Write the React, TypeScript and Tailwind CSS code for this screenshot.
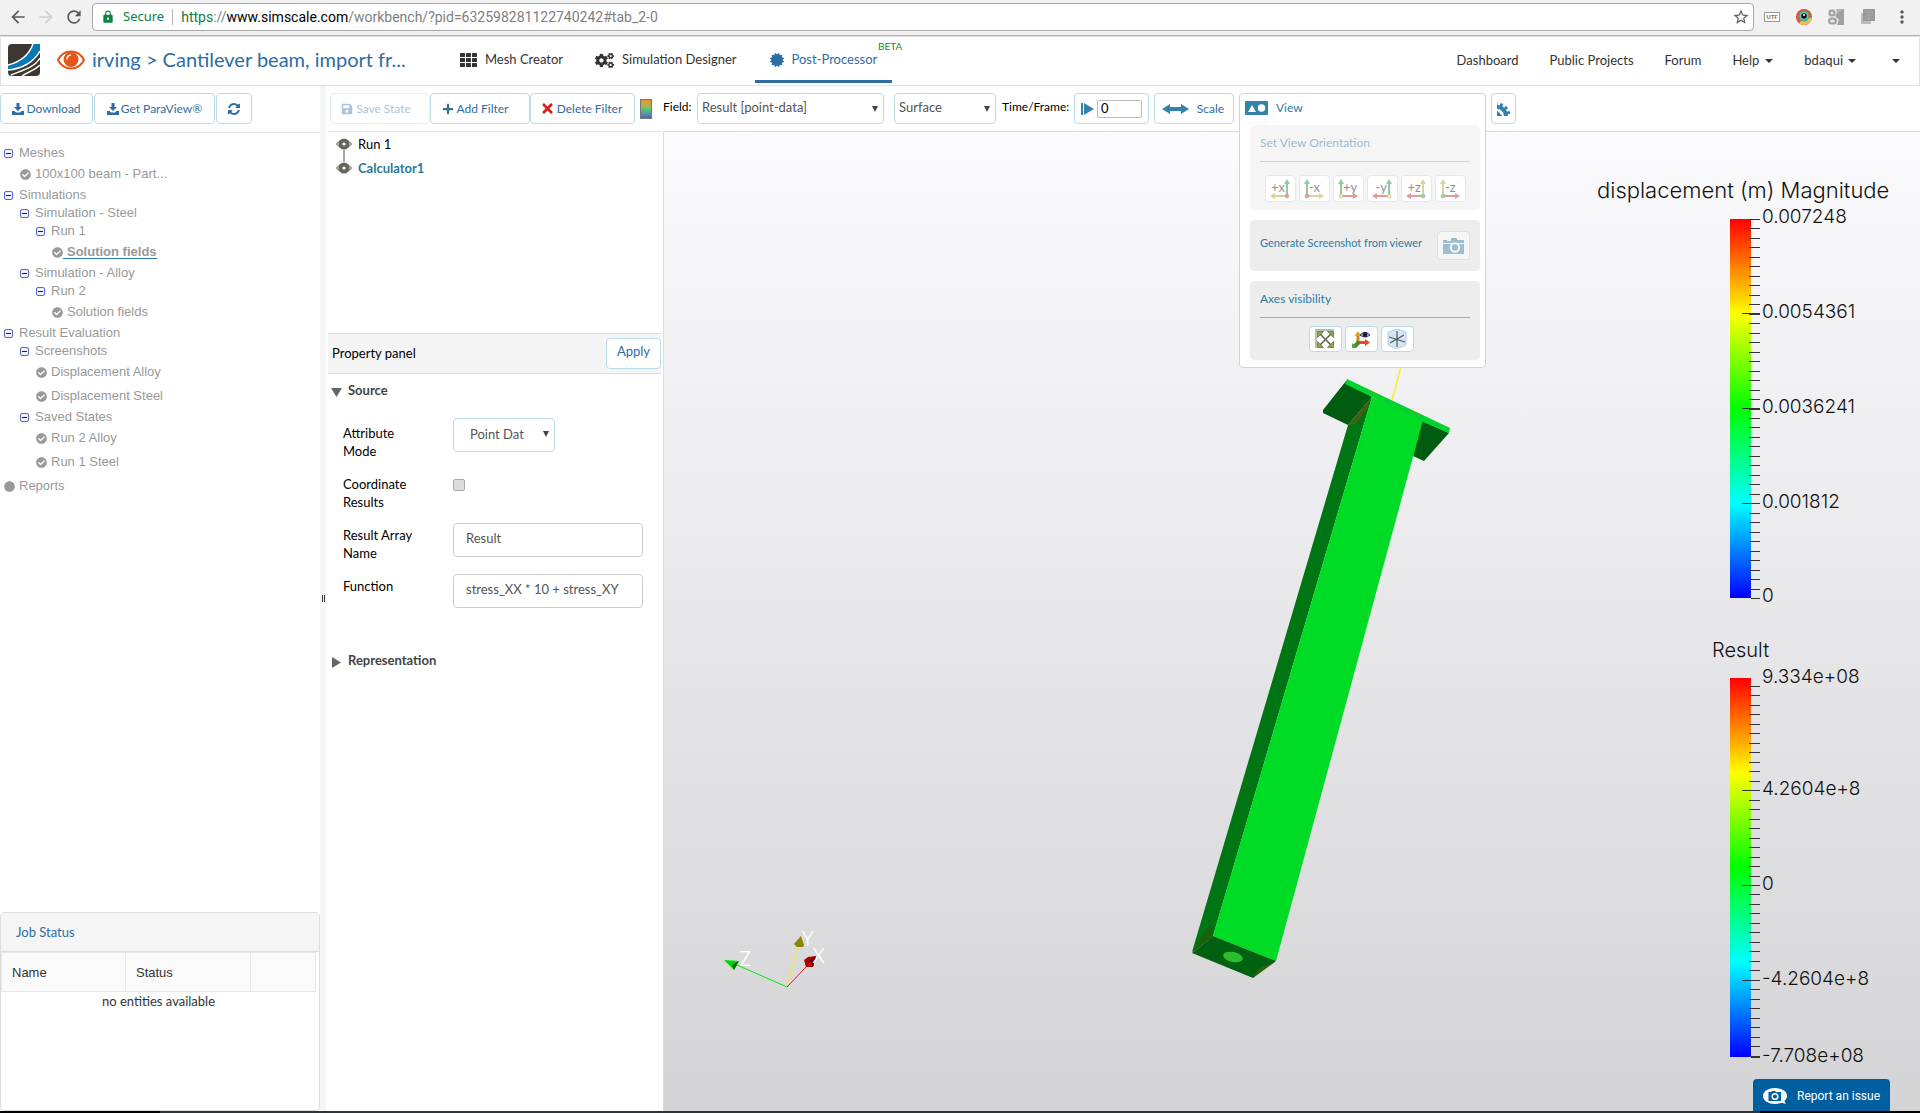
import { useState } from "react";
import type { ReactNode } from "react";
import clsx from "clsx";
import { FaCertificate, FaCheckCircle, FaCircle, FaCogs, FaPlus, FaSave, FaTimes } from "react-icons/fa";
import { MdArrowBack, MdArrowForward, MdLock, MdMoreVert, MdRefresh, MdStarBorder } from "react-icons/md";

const BUTTON =
  "flex h-[31px] shrink-0 items-center justify-center rounded border border-[#bcdbe8] bg-white text-[12px] text-[#2e6da4]";

/* ---------- icons ---------- */

function DownloadIcon() {
  return (
    <svg viewBox="0 0 12 12" className="h-3 w-3" fill="currentColor">
      <path d="M4.500 0h3v4H10L6 8 2 4h2.500zM0 8h2.500l1.500 1.500h4L9.500 8H12v4H0z" />
    </svg>
  );
}

function RefreshIcon() {
  return (
    <svg viewBox="0 0 1792 1792" className="h-[14px] w-[14px]" fill="currentColor">
      <path d="M1639 1056q0 5-1 7-64 268-268 434.500t-478 166.500q-146 0-282.500-55t-243.500-157l-129 129q-19 19-45 19t-45-19-19-45v-448q0-26 19-45t45-19h448q26 0 45 19t19 45-19 45l-137 137q71 66 161 102t187 36q134 0 250-65t186-179q11-17 53-117 8-23 30-23h192q13 0 22.500 9.500t9.500 22.500zm25-800v448q0 26-19 45t-45 19h-448q-26 0-45-19t-19-45 19-45l138-138q-148-137-349-137-134 0-250 65t-186 179q-11 17-53 117-8 23-30 23h-199q-13 0-22.500-9.500t-9.500-22.500v-7q65-268 270-434.500t480-166.500q146 0 284 55.500t245 156.500l130-129q19-19 45-19t45 19 19 45z" />
    </svg>
  );
}

function Logo() {
  return (
    <svg viewBox="0 0 32 32" className="h-8 w-8">
      <rect width="32" height="32" rx="4" fill="#3c3733" />
      <path d="M25 0h7v6C26 18 14 26 0 26v-5C12 18 21 11 25 0z" fill="#0a78b4" />
      <path d="M25 0C21 11 12 18 0 21M32 7C26 18 14 25 0 26M32 14C27 23 15 26 3 31M32 21c-5 5-12 7-18 11" fill="none" stroke="#fff" strokeWidth="1.500" />
    </svg>
  );
}

function OrangeEye() {
  return (
    <svg viewBox="0 0 28 20" className="h-5 w-7">
      <path d="M1 10C4 4 9 1.500 14 1.500S24 4 27 10c-3 6-8 8.500-13 8.500S4 16 1 10z" fill="#fff" stroke="#e2561a" strokeWidth="2" />
      <circle cx="14" cy="9.500" r="7.500" fill="#e2561a" />
      <path d="M10 9.500a4 4 0 0 1 4-4.500" fill="none" stroke="#fff" strokeWidth="1.500" />
    </svg>
  );
}

function GridIcon() {
  return (
    <svg viewBox="0 0 17 14" className="h-[14px] w-[17px]" fill="currentColor">
      {[0, 5, 10].map((y) => [0, 6, 12].map((x) => <rect key={`${x}-${y}`} x={x} y={y} width="5" height="4" rx="0.500" />))}
    </svg>
  );
}

function Caret() {
  return (
    <svg viewBox="0 0 8 4" className="h-1 w-2" fill="currentColor">
      <path d="M0 0h8L4 4z" />
    </svg>
  );
}

function PipelineEye() {
  return (
    <svg viewBox="0 0 16 14" className="h-[14px] w-4">
      <path d="M0.500 7C4 2 12 2 15.500 7 12 12 4 12 0.500 7z" fill="#fff" stroke="#85857a" strokeWidth="1.200" />
      <circle cx="8" cy="7" r="3.600" fill="#fff" stroke="#66665c" strokeWidth="4" />
    </svg>
  );
}

function CameraIcon({ className }: { className: string }) {
  return (
    <svg viewBox="0 0 21 16" className={className}>
      <path d="M0 2h4v1h4V0h6v2h7v3H0zM0 6h21v10H0z" fill="#4b93b6" />
      <circle cx="12" cy="9.500" r="4.200" fill="#4b93b6" stroke="#fff" strokeWidth="2" />
    </svg>
  );
}

function FitIcon() {
  return (
    <svg viewBox="0 0 20 20" className="h-5 w-5">
      <path d="M1 19V1h18" fill="none" stroke="#bdbdb0" strokeWidth="2" />
      <path d="M4 4l13 13M17 4L4 17" stroke="#5a6249" strokeWidth="1.500" />
      <path d="M2.500 2.500h6l-6 6zM18.500 2.500v6l-6-6zM2.500 18.500v-6l6 6zM18.500 18.500h-6l6-6z" fill="#86a84e" stroke="#56653a" strokeWidth="0.700" />
    </svg>
  );
}

function AxesEyeIcon() {
  return (
    <svg viewBox="0 0 20 20" className="h-5 w-5">
      <path d="M7 14V6" stroke="#c98a15" strokeWidth="3" />
      <path d="M7 2L3.500 7h7z" fill="#e3a21c" />
      <path d="M7 13.500h7" stroke="#e0502a" strokeWidth="3" />
      <path d="M14 10l5 3.500-5 3.500z" fill="#e8492a" />
      <path d="M8 13l-5 5" stroke="#4a8a35" strokeWidth="4" />
      <path d="M1 14v5h5z" fill="#5da044" />
      <path d="M9 6q5-5 10 0-5 4-10 0z" fill="#dfe4f2" stroke="#27315a" />
      <circle cx="14" cy="5.500" r="2.500" fill="#161f48" />
    </svg>
  );
}

function CubeIcon() {
  return (
    <svg viewBox="0 0 20 20" className="h-5 w-5">
      <path d="M10 0l9 3v13l-9 4-9-4V3z" fill="#d5e5f4" stroke="#b4cde3" />
      <path d="M10 2v16M2 8l16 5M3 14l14-8" stroke="#4d5a5e" strokeWidth="1.200" />
    </svg>
  );
}

function ClipIcon() {
  return (
    <svg viewBox="0 0 14 14" className="h-[14px] w-[14px]">
      <circle cx="0" cy="14" r="9" fill="none" stroke="#3482aa" strokeWidth="4" />
      <circle cx="0" cy="14" r="12" fill="none" stroke="#3482aa" strokeWidth="3" strokeDasharray="2.700 2.700" />
      <path d="M0 8.500L5.500 14H0z" fill="#3482aa" />
    </svg>
  );
}

type Orientation = {
  label: string;
  mirrored: boolean;
  up: string;
  side: string;
  dot: string;
};

const RED = "#c0392f";
const GREEN = "#2c9438";
const OLIVE = "#b7a93c";

const orientations: Orientation[] = [
  { label: "+x", mirrored: true, up: GREEN, side: OLIVE, dot: "#e83030" },
  { label: "-x", mirrored: false, up: GREEN, side: OLIVE, dot: "#e83030" },
  { label: "+y", mirrored: false, up: GREEN, side: RED, dot: "#f0dc50" },
  { label: "-y", mirrored: true, up: GREEN, side: RED, dot: "#f0dc50" },
  { label: "+z", mirrored: true, up: OLIVE, side: RED, dot: "#12c828" },
  { label: "-z", mirrored: false, up: OLIVE, side: RED, dot: "#12c828" },
];

function OrientationIcon({ label, mirrored, up, side, dot }: Orientation) {
  const x = mirrored ? 17 : 3;
  const end = mirrored ? 0 : 20;
  const inner = mirrored ? 5 : 15;
  return (
    <svg viewBox="0 0 20 20" className="h-5 w-5 overflow-visible">
      <path d={`M${x} 17V4`} stroke={up} strokeWidth="2" />
      <path d={`M${x} 0l3 5h-6z`} fill={up} />
      <path d={`M${x} 17H${inner}`} stroke={side} strokeWidth="2" />
      <path d={`M${end} 17L${inner} 14v6z`} fill={side} />
      <circle cx={x} cy="17" r="2" fill={dot} stroke="#555" strokeWidth="0.500" />
      <text x={mirrored ? 15 : 5} y="13" textAnchor={mirrored ? "end" : "start"} fontSize="13" fill="#222">
        {label}
      </text>
    </svg>
  );
}

/* ---------- browser bar ---------- */

function BrowserBar() {
  return (
    <div className="flex h-9 shrink-0 items-center border-b border-[#b0b0b0] bg-[#f1f1f1] pr-2 pb-px pl-2 font-['Noto_Sans',sans-serif] text-[#5a5a5a]">
      <button aria-label="Back" className="mr-2"><MdArrowBack className="h-5 w-5" /></button>
      <button aria-label="Forward" className="mr-2 text-[#d0d0d0]"><MdArrowForward className="h-5 w-5" /></button>
      <button aria-label="Reload" className="mr-2"><MdRefresh className="h-5 w-5" /></button>
      <div className="flex h-7 flex-1 items-center rounded-sm border border-[#a8a8a8] bg-white px-2">
        <MdLock className="h-[14px] w-[14px] text-[#0b8043]" />
        <span className="ml-2 text-[13px] text-[#0b8043]">Secure</span>
        <span className="mx-2 h-4 w-px bg-[#b5b5b5]" />
        <span className="flex-1 font-['Roboto',sans-serif] text-[14px] whitespace-nowrap text-[#808080]">
          <span className="text-[#0b8043]">https</span>://<span className="text-black">www.simscale.com</span>
          /workbench/?pid=632598281122740242#tab_2-0
        </span>
        <button aria-label="Bookmark" className="-mr-[5px]"><MdStarBorder className="h-[18px] w-[18px]" /></button>
      </div>
      <div className="ml-[10px] flex items-center gap-4">
        <svg viewBox="0 0 16 10" className="h-[10px] w-4">
          <rect x="0.500" y="0.500" width="15" height="9" fill="#fff" stroke="#999" />
          <text x="8" y="7" textAnchor="middle" fontSize="6" fontWeight="bold" fill="#777">UTF</text>
        </svg>
        <svg viewBox="0 0 16 16" className="h-4 w-4">
          <circle cx="8" cy="8" r="8" fill="#e2502e" />
          <path d="M8 8L16 9A8 8 0 0 1 3 14z" fill="#f4b860" />
          <circle cx="8" cy="7" r="5.500" fill="#4cae6a" />
          <circle cx="8" cy="7" r="4" fill="#5ccbe0" />
          <circle cx="8" cy="7" r="2.800" fill="#111" />
          <circle cx="8" cy="6" r="1" fill="#fff" />
        </svg>
        <svg viewBox="0 0 16 16" className="h-4 w-4">
          <path d="M0 0h16v16H0z" fill="#b5b5b5" />
          <path d="M8 5l8-5v16H9z" fill="#a0a0a0" />
          <path d="M0 0h8q2 4-1 7l4 4-2 5H0z" fill="#e8e8e8" />
          <circle cx="4" cy="4" r="2.500" fill="none" stroke="#a0a0a0" strokeWidth="2" />
          <ellipse cx="4.500" cy="12" rx="3.500" ry="2.500" fill="none" stroke="#a0a0a0" strokeWidth="2" />
        </svg>
        <svg viewBox="0 0 16 16" className="h-4 w-4">
          <path d="M1 4h10v11H1z" fill="#bbb" />
          <path d="M3 0h12v12H3z" fill="#999" />
          <path d="M5 3h8M5 6h8M5 9h8M9 2v9" stroke="#a8a8a8" />
        </svg>
        <button aria-label="Browser menu"><MdMoreVert className="h-5 w-5" /></button>
      </div>
    </div>
  );
}

/* ---------- app header ---------- */

function Header() {
  return (
    <header className="flex h-[50px] shrink-0 items-center border border-[#e2e2e2] pb-[2px] pl-[7px] text-[13px] text-[#333]">
      <Logo />
      <span className="ml-[17px]"><OrangeEye /></span>
      <h1 className="ml-[7px] w-[354px] truncate pb-[2px] text-[20px] text-[#2e6da4]">irving &gt; Cantilever beam, import fr...</h1>
      <nav className="flex h-full flex-1">
        <a href="#mesh" className="flex items-center gap-2 px-[14px]"><GridIcon />Mesh Creator</a>
        <a href="#simulation" className="flex items-center gap-2 px-[18px]"><FaCogs className="h-[17px] w-[19px]" />Simulation Designer</a>
        <a href="#post" className="relative flex items-center gap-2 px-[15px] text-[#2e6da4]">
          <FaCertificate className="h-[14px] w-[14px]" />
          Post-Processor
          <sup className="absolute top-1 -right-[10px] text-[10px] leading-none text-[#1a8a1a]">BETA</sup>
          <span className="absolute inset-x-0 bottom-0 h-[3px] bg-[#2e6da4]" />
        </a>
      </nav>
      <nav className="flex items-center gap-[31px] pt-px pr-[19px]">
        <a href="#dashboard">Dashboard</a>
        <a href="#projects">Public Projects</a>
        <a href="#forum">Forum</a>
        <button className="flex items-center gap-[6px]">Help <Caret /></button>
        <button className="flex items-center gap-[5px]">bdaqui <Caret /></button>
        <button aria-label="More" className="ml-[5px]"><Caret /></button>
      </nav>
    </header>
  );
}

/* ---------- project tree ---------- */

type TreeItem = {
  label: string;
  level: number;
  kind: "branch" | "leaf" | "dot";
  active?: boolean;
};

const tree: TreeItem[] = [
  { label: "Meshes", level: 0, kind: "branch" },
  { label: "100x100 beam - Part...", level: 1, kind: "leaf" },
  { label: "Simulations", level: 0, kind: "branch" },
  { label: "Simulation - Steel", level: 1, kind: "branch" },
  { label: "Run 1", level: 2, kind: "branch" },
  { label: "Solution fields", level: 3, kind: "leaf", active: true },
  { label: "Simulation - Alloy", level: 1, kind: "branch" },
  { label: "Run 2", level: 2, kind: "branch" },
  { label: "Solution fields", level: 3, kind: "leaf" },
  { label: "Result Evaluation", level: 0, kind: "branch" },
  { label: "Screenshots", level: 1, kind: "branch" },
  { label: "Displacement Alloy", level: 2, kind: "leaf" },
  { label: "Displacement Steel", level: 2, kind: "leaf" },
  { label: "Saved States", level: 1, kind: "branch" },
  { label: "Run 2 Alloy", level: 2, kind: "leaf" },
  { label: "Run 1 Steel", level: 2, kind: "leaf" },
  { label: "Reports", level: 0, kind: "dot" },
];

const INDENT = ["pl-1", "pl-5", "pl-9", "pl-13"];

function TreeRow({ item }: { item: TreeItem }) {
  return (
    <li
      className={clsx(
        "flex items-center",
        INDENT[item.level],
        item.kind === "branch" ? "h-[18px]" : "h-6"
      )}
    >
      {item.kind === "branch" && (
        <button
          aria-label={`Collapse ${item.label}`}
          className="mr-[6px] flex h-[9px] w-[9px] items-center justify-center rounded-xs border border-[#5a68b8] bg-[#eef0fa]"
        >
          <span className="h-px w-[5px] bg-[#101880]" />
        </button>
      )}
      {item.kind === "leaf" && <FaCheckCircle className="h-[11px] w-[11px]" />}
      {item.kind === "dot" && <FaCircle className="mr-1 h-[11px] w-[11px]" />}
      <a
        href="#item"
        className={clsx(
          item.kind === "leaf" && "pl-1",
          item.active && "border-b border-[#2a7ab0] font-bold leading-[13px]"
        )}
      >
        {item.label}
      </a>
    </li>
  );
}

function JobStatus() {
  return (
    <section className="flex h-[199px] shrink-0 flex-col rounded border border-[#ddd]">
      <h2 className="border-b border-[#ddd] bg-[#f5f5f5] px-[15px] text-[13px] leading-[38px] text-[#2e6da4]">Job Status</h2>
      <table className="mr-[3px] border-collapse text-[#333]">
        <thead>
          <tr className="h-[39px] bg-[#fafafa] text-left font-['Liberation_Sans',sans-serif] text-[13px]">
            <th className="w-[124px] border border-[#e6e6e6] px-[10px] pt-px font-normal">Name</th>
            <th className="w-[125px] border border-[#e6e6e6] px-[10px] pt-px font-normal">Status</th>
            <th className="border border-[#e6e6e6]" />
          </tr>
        </thead>
        <tbody>
          <tr>
            <td colSpan={3} className="text-center text-[13px] leading-[18px]">no entities available</td>
          </tr>
        </tbody>
      </table>
    </section>
  );
}

function ProjectSidebar() {
  return (
    <aside className="flex w-80 shrink-0 flex-col">
      <div className="flex h-[47px] items-start gap-px border-b border-[#e2e2e2] pt-[7px]">
        <button className={clsx(BUTTON, "w-[93px] gap-[2px]")}><DownloadIcon />Download</button>
        <button className={clsx(BUTTON, "w-[121px] gap-[2px]")}><DownloadIcon />Get ParaView®</button>
        <button aria-label="Refresh" className={clsx(BUTTON, "w-9")}><RefreshIcon /></button>
      </div>
      <ul className="flex-1 pt-[11px] font-['Liberation_Sans',sans-serif] text-[13px] text-[#999]">
        {tree.map((item, i) => (
          <TreeRow key={i} item={item} />
        ))}
      </ul>
      <JobStatus />
    </aside>
  );
}

/* ---------- toolbar ---------- */

function SelectArrow() {
  return (
    <svg viewBox="0 0 6 6" className="pointer-events-none absolute top-[13px] right-[6px] h-[6px] w-[6px]">
      <path d="M0 0h6L3 6z" fill="#444" />
    </svg>
  );
}

function ViewBox({ title, children }: { title: string; children: ReactNode }) {
  return (
    <section className="rounded-sm bg-[#ededed] px-[10px] text-[12px] text-[#2a7ca6]">
      <h3 className="border-b border-[#aaa] leading-9">{title}</h3>
      {children}
    </section>
  );
}

function ViewMenu() {
  return (
    <div className="absolute top-0 left-0 z-10 flex h-[275px] w-[247px] flex-col rounded border border-[#bcdbe8] bg-white pr-[5px] pl-[10px]">
      <button className="flex h-7 items-center gap-2 text-[12px] text-[#2a7ca6]">
        <svg viewBox="0 0 23 14" className="-ml-[5px] h-[14px] w-[23px]">
          <rect width="23" height="14" rx="1" fill="#3482aa" />
          <path d="M3 11l4-7 4 7z" fill="#fff" />
          <circle cx="16.500" cy="7" r="3.700" fill="#fff" />
        </svg>
        View
      </button>
      <div className="mt-[3px] flex flex-col gap-[10px]">
        <div className="opacity-50">
          <ViewBox title="Set View Orientation">
            <div className="flex h-12 items-center justify-center gap-[3px] pt-[5px]">
              {orientations.map((o) => (
                <button key={o.label} aria-label={`View along ${o.label}`} className="flex h-[27px] w-[31px] items-center justify-center rounded border border-[#bcdbe8] bg-white">
                  <OrientationIcon {...o} />
                </button>
              ))}
            </div>
          </ViewBox>
        </div>
        <section className="flex h-[51px] items-center justify-between rounded-sm bg-[#ededed] px-[10px] text-[11px] text-[#2a7ca6]">
          <span className="pb-1 whitespace-nowrap">Generate Screenshot from viewer</span>
          <button aria-label="Take screenshot" className="flex h-[29px] w-[33px] items-center justify-center rounded border border-[#bcdbe8] bg-white opacity-50">
            <CameraIcon className="h-4 w-[21px]" />
          </button>
        </section>
        <ViewBox title="Axes visibility">
          <div className="flex h-[42px] items-center justify-center gap-[3px] pr-2">
            <button aria-label="Fit view" className="flex h-[26px] w-[33px] items-center justify-center rounded border border-[#bcdbe8] bg-white"><FitIcon /></button>
            <button aria-label="Toggle axes" className="flex h-[26px] w-[33px] items-center justify-center rounded border border-[#bcdbe8] bg-white"><AxesEyeIcon /></button>
            <button aria-label="Toggle cube axes" className="flex h-[26px] w-[33px] items-center justify-center rounded border border-[#bcdbe8] bg-white"><CubeIcon /></button>
          </div>
        </ViewBox>
      </div>
    </div>
  );
}

function Toolbar() {
  const [frame, setFrame] = useState("0");
  return (
    <div className="flex h-[45px] shrink-0 items-start pt-[7px] pl-[2px] text-[12px]">
      <button disabled className={clsx(BUTTON, "w-[100px] gap-[3px] pr-2 opacity-40")}><FaSave className="h-3 w-3" />Save State</button>
      <button className={clsx(BUTTON, "w-[100px] gap-[3px] pr-[10px]")}><FaPlus className="h-3 w-3 text-[#35748f]" />Add Filter</button>
      <button className={clsx(BUTTON, "mr-[5px] w-[105px] gap-[3px] pr-[2px]")}><FaTimes className="h-[15px] w-[13px] text-[#d91f1f]" />Delete Filter</button>
      <span className="mt-[6px] h-5 w-3 shrink-0 border border-[#777] bg-linear-to-b from-[#f08a24] via-[#5ec46c] to-[#5560c8]" />
      <label htmlFor="field" className="w-[45px] shrink-0 pl-[11px] leading-7">Field:</label>
      <span className="relative mr-[10px] shrink-0">
        <select id="field" className="block h-[31px] w-[187px] appearance-none rounded border border-[#bcdbe8] bg-white px-1 pb-px text-[13px] text-[#555]">
          <option>Result [point-data]</option>
        </select>
        <SelectArrow />
      </span>
      <span className="relative shrink-0">
        <select aria-label="Representation" className="block h-[31px] w-[102px] appearance-none rounded border border-[#bcdbe8] bg-white px-1 pb-px text-[13px] text-[#555]">
          <option>Surface</option>
        </select>
        <SelectArrow />
      </span>
      <label htmlFor="frame" className="w-[78px] shrink-0 pl-[6px] leading-7 whitespace-nowrap">Time/Frame:</label>
      <span className={clsx(BUTTON, "mr-[5px] w-[75px] gap-[3px]")}>
        <svg viewBox="0 0 13 12" className="h-3 w-[13px]" fill="#3482aa">
          <path d="M0 0h2v12H0zM3 0l10 6-10 6z" />
        </svg>
        <input
          id="frame"
          value={frame}
          onChange={(e) => setFrame(e.target.value)}
          className="h-[18px] w-[45px] rounded-xs border border-[#bbb] px-[3px] text-[13px] text-black"
        />
      </span>
      <button className={clsx(BUTTON, "mr-[5px] w-20 gap-2 pr-[2px]")}>
        <svg viewBox="0 0 27 10" className="h-[10px] w-[27px]" fill="#3482aa">
          <path d="M0 5l8-5v3h11V0l8 5-8 5V7H8v3z" />
        </svg>
        Scale
      </button>
      <div className="relative mr-[5px] h-[31px] w-[247px] shrink-0">
        <ViewMenu />
      </div>
      <button aria-label="Clip settings" className={clsx(BUTTON, "w-[25px]")}><ClipIcon /></button>
    </div>
  );
}

/* ---------- pipeline and properties ---------- */

function Disclosure({ open, children }: { open: boolean; children: ReactNode }) {
  return (
    <button className="flex items-center gap-[6px] pl-[3px] text-[13px] leading-5 font-bold text-[#444]">
      <svg viewBox="0 0 11 11" className="mt-1 h-[11px] w-[11px]" fill="#666">
        <path d={open ? "M0 1h11L5.500 10z" : "M1 0l9 5.500L1 11z"} />
      </svg>
      {children}
    </button>
  );
}

const FIELD = "h-[34px] rounded border border-[#ccc] bg-white px-3 pb-[5px] text-[13px] text-[#555]";

function Properties() {
  const [arrayName, setArrayName] = useState("Result");
  const [formula, setFormula] = useState("stress_XX * 10 + stress_XY");
  return (
    <section className="flex w-[333px] shrink-0 flex-col">
      <ul className="h-[202px] border-t border-[#e2e2e2] pl-2 text-[13px] leading-6 text-black">
        <li className="flex items-center gap-[6px]"><PipelineEye />Run 1</li>
        <li className="relative flex items-center gap-[6px] font-bold text-[#2a7a98]">
          <span className="absolute -top-[6px] left-[7px] h-3 w-[2px] bg-[#aaa]" />
          <PipelineEye />
          Calculator1
        </li>
      </ul>
      <div className="flex h-[41px] items-center justify-between border-y border-[#ddd] bg-[#f4f4f4] pl-1 text-[13px] text-black">
        Property panel
        <button className="h-[31px] w-[55px] rounded border border-[#bcdbe8] bg-white pb-[3px] text-[#2e6da4]">Apply</button>
      </div>
      <div className="pt-[6px]"><Disclosure open>Source</Disclosure></div>
      <div className="grid grid-cols-[110px_190px] gap-y-3 pt-[18px] pb-[42px] pl-[15px] text-[13px] leading-[18px] text-black">
        <label htmlFor="mode" className="w-20 pt-[6px]">Attribute Mode</label>
        <span>
          <span className="relative inline-block">
            <select id="mode" className="block h-[34px] w-[102px] appearance-none rounded border border-[#bcdbe8] bg-white px-4 pb-[3px] text-[13px] text-[#555]">
              <option>Point Dat</option>
            </select>
            <SelectArrow />
          </span>
        </span>
        <label htmlFor="coordinates" className="w-20 pt-[3px]">Coordinate Results</label>
        <input
          id="coordinates"
          type="checkbox"
          className="mt-[7px] h-3 w-3 appearance-none rounded-xs border border-[#aaa] bg-[#ddd] checked:bg-[#3482aa]"
        />
        <label htmlFor="array" className="w-20 pt-[3px]">Result Array Name</label>
        <input id="array" value={arrayName} onChange={(e) => setArrayName(e.target.value)} className={FIELD} />
        <label htmlFor="formula" className="pt-[3px]">Function</label>
        <input id="formula" value={formula} onChange={(e) => setFormula(e.target.value)} className={FIELD} />
      </div>
      <Disclosure open={false}>Representation</Disclosure>
    </section>
  );
}

/* ---------- 3D viewer ---------- */

type Tick = { y: number; label: string };

type LegendProps = {
  id: string;
  title: string;
  titleX: number;
  titleSize: number;
  top: number;
  firstTick: number;
  majors: Tick[];
  ends: Tick[];
};

const STEP = 379 / 40;

function Legend({ id, title, titleX, titleSize, top, firstTick, majors, ends }: LegendProps) {
  const minors = Array.from({ length: 40 }, (_, i) => firstTick + i * STEP).filter((y) => y <= top + 380);
  return (
    <g fontSize="19" fill="#111">
      <linearGradient id={id} x1="0" x2="0" y1="0" y2="1">
        <stop offset="0" stopColor="#f00" />
        <stop offset="0.250" stopColor="#ff0" />
        <stop offset="0.500" stopColor="#0f0" />
        <stop offset="0.750" stopColor="#0ff" />
        <stop offset="1" stopColor="#00f" />
      </linearGradient>
      <text x={titleX} y={top - 21} fontSize={titleSize}>{title}</text>
      <rect x="1730" y={top} width="21" height="379" fill={`url(#${id})`} />
      <g fill="#333">
        {minors.map((y) => <rect key={y} x="1749" y={Math.round(y)} width="11" height="1" />)}
        {majors.map((t) => <rect key={t.y} x="1742" y={t.y} width="18" height="1" />)}
        <rect x="1751" y={top + 379} width="9" height="1" />
      </g>
      {majors.concat(ends).map((t) => (
        <text key={t.label} x="1762" y={t.y + 5}>{t.label}</text>
      ))}
    </g>
  );
}

function Beam() {
  return (
    <g>
      <path d="M1401 367l-9 33" stroke="#f2f032" strokeWidth="1.500" />
      <path d="M1346 381l26 16-24 28-25-12v-3z" fill="#005c10" />
      <path d="M1422 421l27 12-25 28-11-5z" fill="#005c10" />
      <path d="M1372 397l-24 28-156 527 21-16z" fill="#007514" />
      <path d="M1370 400l-21 25 6-1 13-17z" fill="#4f5a0c" />
      <path d="M1372 397l51 23-147 541-63-25z" fill="#00dc26" />
      <path d="M1347 379l103 49-1 5-26-11-51-25-27-13z" fill="#00d330" />
      <path d="M1370 391l11 5M1410 410l12 6" stroke="#6ba80c" />
      <path d="M1213 936l63 25-23 17-61-25z" fill="#006210" />
      <path d="M1213 936l-21 17 18-29z" fill="#1c610a" />
      <path d="M1276 961l-23 16 6-8z" fill="#3d5f0c" />
      <ellipse cx="1233" cy="957" rx="10" ry="5" fill="#2bbd2c" transform="rotate(12 1233 957)" />
    </g>
  );
}

function AxesTriad() {
  return (
    <g fontSize="20">
      <path d="M787 987l-50-22" stroke="#00e810" />
      <path d="M787 987l11-43" stroke="#f4f020" />
      <path d="M787 987l20-21" stroke="#f01020" />
      <path d="M724 960l15 1-5 9z" fill="#00d800" />
      <path d="M739 961l-5 9-2-5z" fill="#006c00" />
      <path d="M801 936l3 9-1 2h-6l-3-3z" fill="#8a8500" />
      <path d="M816 956l-3 11h-7l-2-7 4-3z" fill="#b00000" />
      <path d="M816 956l-3 11-3-7z" fill="#700000" />
      <g fill="#fff">
        <text x="739" y="966">Z</text>
        <text x="801" y="946">Y</text>
        <text x="812" y="963">X</text>
      </g>
    </g>
  );
}

function Viewer() {
  return (
    <main className="relative min-w-0 flex-1 border-t border-l border-[#ddd] bg-linear-to-b from-[#fbfafc] to-[#d4d3d5]">
      <svg viewBox="664 132 1256 979" className="absolute inset-0 h-full w-full font-['Inter',sans-serif] font-light" role="img" aria-label="Cantilever beam result">
        <Beam />
        <AxesTriad />
        <Legend
          id="displacement"
          title="displacement (m) Magnitude"
          titleX={1597}
          titleSize={22}
          top={219}
          firstTick={219}
          majors={[
            { y: 313, label: "0.0054361" },
            { y: 408, label: "0.0036241" },
            { y: 503, label: "0.001812" },
          ]}
          ends={[
            { y: 218, label: "0.007248" },
            { y: 597, label: "0" },
          ]}
        />
        <Legend
          id="result"
          title="Result"
          titleX={1712}
          titleSize={20}
          top={678}
          firstTick={686}
          majors={[
            { y: 790, label: "4.2604e+8" },
            { y: 885, label: "0" },
            { y: 980, label: "-4.2604e+8" },
          ]}
          ends={[
            { y: 678, label: "9.334e+08" },
            { y: 1057, label: "-7.708e+08" },
          ]}
        />
      </svg>
      <button className="absolute right-[30px] bottom-0 flex h-8 w-[137px] items-center gap-[10px] rounded-t bg-[#005f9e] pt-[2px] pl-[10px] font-['Roboto',sans-serif] text-[12px] whitespace-nowrap text-white">
        <svg viewBox="0 0 24 17" className="h-[17px] w-6">
          <ellipse cx="12" cy="8" rx="12" ry="8" fill="#fff" />
          <path d="M16 14l7 2-3-5z" fill="#fff" />
          <path d="M5.500 4h3V3h4v1h5.500v9H5.500z" fill="#005f9e" />
          <circle cx="12" cy="8.500" r="2.800" fill="none" stroke="#fff" strokeWidth="1.500" />
        </svg>
        Report an issue
      </button>
    </main>
  );
}

export default function App() {
  return (
    <div className="flex h-screen flex-col overflow-hidden bg-white font-['Lato',sans-serif] text-black">
      <BrowserBar />
      <Header />
      <div className="flex min-h-0 flex-1">
        <ProjectSidebar />
        <div className="mr-[2px] flex w-[6px] shrink-0 items-center justify-center bg-[#f5f5f5]">
          <span className="h-[7px] w-[3px] border-x border-[#333]" />
        </div>
        <div className="flex min-w-0 flex-1 flex-col">
          <Toolbar />
          <div className="flex min-h-0 flex-1 gap-[2px]">
            <Properties />
            <Viewer />
          </div>
        </div>
      </div>
      <div className="flex h-[2px] shrink-0 bg-[#2f3437]">
        <span className="w-40 bg-black" />
        <span className="ml-auto w-40 bg-black" />
      </div>
    </div>
  );
}
